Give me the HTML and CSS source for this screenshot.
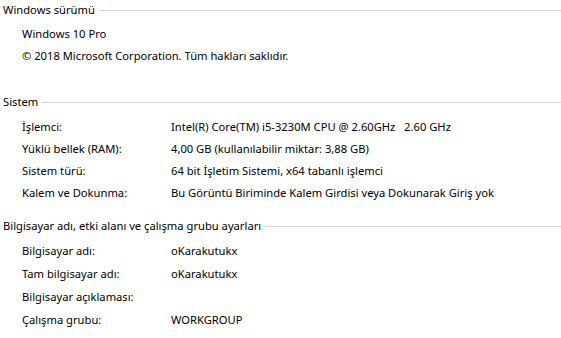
FILE: index.html
```html
<!DOCTYPE html>
<html lang="tr">
<head>
    <meta charset="UTF-8">
    <meta name="viewport" content="width=device-width, initial-scale=1.0">
    <title>Sistem</title>
    <link rel="stylesheet" href="styles.css">
</head>
<body>
    <div class="panel">
        <section class="group group-edition">
            <div class="group-title"><span>Windows sürümü</span></div>
            <div class="rows">
                <div class="row"><span>Windows 10 Pro</span></div>
                <div class="row"><span>© 2018 Microsoft Corporation. Tüm hakları saklıdır.</span></div>
            </div>
        </section>

        <section class="group group-system">
            <div class="group-title"><span>Sistem</span></div>
            <div class="rows">
                <div class="row"><span class="label">İşlemci:</span><span class="value">Intel(R) Core(TM) i5-3230M CPU @ 2.60GHz&nbsp;&nbsp;&nbsp;2.60 GHz</span></div>
                <div class="row"><span class="label">Yüklü bellek (RAM):</span><span class="value">4,00 GB (kullanılabilir miktar: 3,88 GB)</span></div>
                <div class="row"><span class="label">Sistem türü:</span><span class="value">64 bit İşletim Sistemi, x64 tabanlı işlemci</span></div>
                <div class="row"><span class="label">Kalem ve Dokunma:</span><span class="value">Bu Görüntü Biriminde Kalem Girdisi veya Dokunarak Giriş yok</span></div>
            </div>
        </section>

        <section class="group group-computer">
            <div class="group-title"><span>Bilgisayar adı, etki alanı ve çalışma grubu ayarları</span></div>
            <div class="rows">
                <div class="row"><span class="label">Bilgisayar adı:</span><span class="value">oKarakutukx</span></div>
                <div class="row"><span class="label">Tam bilgisayar adı:</span><span class="value">oKarakutukx</span></div>
                <div class="row"><span class="label">Bilgisayar açıklaması:</span><span class="value"></span></div>
                <div class="row"><span class="label">Çalışma grubu:</span><span class="value">WORKGROUP</span></div>
            </div>
        </section>
    </div>
</body>
</html>
```

FILE: styles.css
```css
:root {
    --text-color: #000;
    --rule-color: #d5d5d5;
}

* {
    margin: 0;
    padding: 0;
    box-sizing: border-box;
}

body {
    font-family: 'Noto Sans', 'DejaVu Sans', sans-serif;
    font-size: 11.2px;
    color: var(--text-color);
    background-color: #fff;
}

.panel {
    width: 561px;
}

.group-title {
    display: flex;
    align-items: center;
    height: 20px;
    line-height: 20px;
    padding-left: 3px;
    white-space: nowrap;
}

.group-title::after {
    content: '';
    flex: 1;
    height: 1px;
    margin-left: 4px;
    background-color: var(--rule-color);
}

.rows {
    padding-top: 4px;
    padding-left: 22px;
}

.row {
    display: flex;
    height: 22px;
    line-height: 22px;
    white-space: nowrap;
}

.label {
    width: 149px;
    flex-shrink: 0;
}

.group-edition .rows {
    padding-top: 3px;
}

.group-system {
    margin-top: 25px;
}

.group-computer {
    margin-top: 12px;
}

.group-computer .rows {
    padding-top: 3px;
}

.group-computer .row {
    height: 23px;
    line-height: 23px;
}
```
